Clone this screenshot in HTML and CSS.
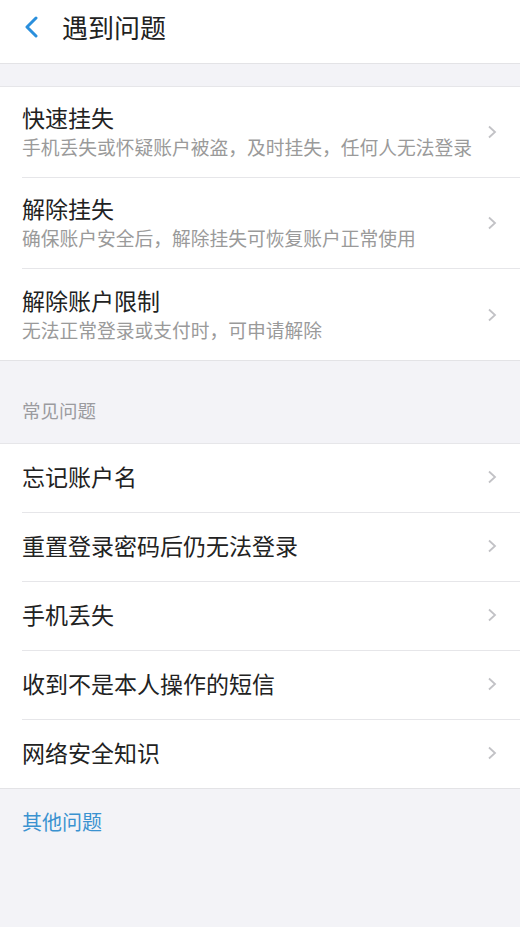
FILE: index.html
```html
<!DOCTYPE html>
<html lang="zh-CN">
<head>
<meta charset="utf-8">
<title>遇到问题</title>
<link rel="stylesheet" href="styles.css">
</head>
<body>
<header class="topbar">
  <svg class="back" width="18" height="22" viewBox="0 0 18 22"><path d="M14 2 L5 11 L14 20" fill="none" stroke="#2a8fdc" stroke-width="3" stroke-linecap="round" stroke-linejoin="round"/></svg>
  <h1 class="title">遇到问题</h1>
</header>
<div class="gap"></div>
<section class="group">
  <a class="item two">
    <div class="text"><div class="main">快速挂失</div><div class="sub">手机丢失或怀疑账户被盗，及时挂失，任何人无法登录</div></div>
    <svg class="chev" width="10" height="14" viewBox="0 0 10 14"><path d="M2 1.5 L8 7 L2 12.5" fill="none" stroke="#c2c2c6" stroke-width="1.8"/></svg>
  </a>
  <a class="item two">
    <div class="text"><div class="main">解除挂失</div><div class="sub">确保账户安全后，解除挂失可恢复账户正常使用</div></div>
    <svg class="chev" width="10" height="14" viewBox="0 0 10 14"><path d="M2 1.5 L8 7 L2 12.5" fill="none" stroke="#c2c2c6" stroke-width="1.8"/></svg>
  </a>
  <a class="item two">
    <div class="text"><div class="main">解除账户限制</div><div class="sub">无法正常登录或支付时，可申请解除</div></div>
    <svg class="chev" width="10" height="14" viewBox="0 0 10 14"><path d="M2 1.5 L8 7 L2 12.5" fill="none" stroke="#c2c2c6" stroke-width="1.8"/></svg>
  </a>
</section>
<div class="label">常见问题</div>
<section class="group">
  <a class="item one"><div class="main">忘记账户名</div><svg class="chev" width="10" height="14" viewBox="0 0 10 14"><path d="M2 1.5 L8 7 L2 12.5" fill="none" stroke="#c2c2c6" stroke-width="1.8"/></svg></a>
  <a class="item one"><div class="main">重置登录密码后仍无法登录</div><svg class="chev" width="10" height="14" viewBox="0 0 10 14"><path d="M2 1.5 L8 7 L2 12.5" fill="none" stroke="#c2c2c6" stroke-width="1.8"/></svg></a>
  <a class="item one"><div class="main">手机丢失</div><svg class="chev" width="10" height="14" viewBox="0 0 10 14"><path d="M2 1.5 L8 7 L2 12.5" fill="none" stroke="#c2c2c6" stroke-width="1.8"/></svg></a>
  <a class="item one"><div class="main">收到不是本人操作的短信</div><svg class="chev" width="10" height="14" viewBox="0 0 10 14"><path d="M2 1.5 L8 7 L2 12.5" fill="none" stroke="#c2c2c6" stroke-width="1.8"/></svg></a>
  <a class="item one"><div class="main">网络安全知识</div><svg class="chev" width="10" height="14" viewBox="0 0 10 14"><path d="M2 1.5 L8 7 L2 12.5" fill="none" stroke="#c2c2c6" stroke-width="1.8"/></svg></a>
</section>
<div class="other">其他问题</div>
</body>
</html>
```
FILE: styles.css
```css
* { box-sizing: border-box; }
html, body { margin: 0; padding: 0; }
body {
  background: #f3f3f7;
  font-family: "Noto Sans CJK SC", "Noto Sans", sans-serif;
  color: #222;
  min-height: 927px;
}
.topbar {
  height: 64px;
  background: #fff;
  border-bottom: 1px solid #e3e3e6;
  display: flex;
  align-items: center;
  padding-left: 22px;
}
.back { margin-top: -9px; }
.title {
  margin: -9px 0 0 22px;
  font-size: 26px;
  font-weight: 400;
  line-height: 30px;
  color: #222;
}
.gap { height: 22px; }
.group {
  background: #fff;
  border-top: 1px solid #e6e6e9;
  border-bottom: 1px solid #e3e3e6;
}
.item {
  display: flex;
  align-items: center;
  justify-content: space-between;
  margin-left: 22px;
  padding-right: 22px;
  border-bottom: 1px solid #e6e6e9;
}
.item:last-child { border-bottom: none; }
.item.two { height: 91px; }
.item.one { height: 69px; padding-bottom: 3px; }
.item.one:last-child { height: 68px; }
.main {
  font-size: 23px;
  line-height: 29px;
  color: #222;
}
.sub {
  font-size: 18.75px;
  line-height: 29px;
  color: #9a9a9a;
  white-space: nowrap;
}
.chev { flex: none; margin-right: 1px; }
.label {
  height: 82px;
  padding: 37px 22px 0;
  font-size: 18.5px;
  line-height: 24px;
  color: #9b9b9f;
}
.other {
  padding: 20px 22px 0;
  font-size: 20px;
  line-height: 26px;
  color: #3a92d0;
}
```
